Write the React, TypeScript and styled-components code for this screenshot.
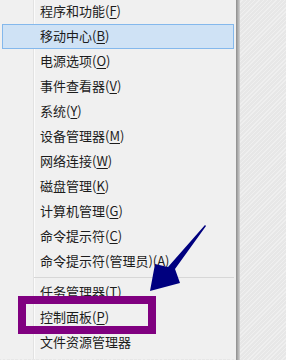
import React from 'react';
import styled, { createGlobalStyle } from 'styled-components';

const GlobalStyle = createGlobalStyle`
  html, body {
    margin: 0;
    padding: 0;
    width: 286px;
    height: 360px;
    overflow: hidden;
  }
`;

const Screen = styled.div`
  position: relative;
  display: flex;
  width: 286px;
  height: 360px;
  overflow: hidden;
  background-color: #e7e7e7;
  background-image: repeating-linear-gradient(
    135deg,
    rgba(255, 255, 255, 0.35) 0px,
    rgba(255, 255, 255, 0.35) 1px,
    transparent 1px,
    transparent 3px
  );
  font-family: 'Noto Sans CJK SC', 'Noto Sans', sans-serif;
`;

const Menu = styled.div`
  width: 236px;
  height: 100%;
  flex-shrink: 0;
  background: #f0f0f0;
  background-image: linear-gradient(
    to right,
    transparent 33px,
    #e2e2e2 33px,
    #e2e2e2 34px,
    #fbfbfb 34px,
    #fbfbfb 35px,
    transparent 35px
  );
  display: flex;
  flex-direction: column;
  padding: 0 2px;
  margin-top: -1px;
  box-sizing: border-box;
`;

const Edge = styled.div`
  width: 4px;
  height: 100%;
  flex-shrink: 0;
  background: linear-gradient(to right, #8c8c8c, #a8a8a8 40%, #d2d2d2);
`;

const Item = styled.div<{ $active?: boolean }>`
  height: 25px;
  box-sizing: border-box;
  display: flex;
  align-items: center;
  padding: 0 0 2px 37px;
  font-size: 13px;
  color: #1c1c1c;
  white-space: nowrap;
  border: 1px solid ${({ $active }) => ($active ? '#84b8ec' : 'transparent')};
  background: ${({ $active }) => ($active ? '#cfe2f5' : 'transparent')};

  u {
    text-decoration-thickness: 1px;
    text-underline-offset: 2px;
  }
`;

const Separator = styled.div`
  height: 6px;
  display: flex;
  align-items: center;
  padding-left: 32px;

  &::after {
    content: '';
    flex: 1;
    height: 1px;
    background: #d7d7d7;
  }
`;

const Overlay = styled.svg`
  position: absolute;
  left: 0;
  top: 0;
  pointer-events: none;
`;

type Entry = { label: string; key?: string; active?: boolean };

const top: Entry[] = [
  { label: '程序和功能', key: 'F' },
  { label: '移动中心', key: 'B', active: true },
  { label: '电源选项', key: 'O' },
  { label: '事件查看器', key: 'V' },
  { label: '系统', key: 'Y' },
  { label: '设备管理器', key: 'M' },
  { label: '网络连接', key: 'W' },
  { label: '磁盘管理', key: 'K' },
  { label: '计算机管理', key: 'G' },
  { label: '命令提示符', key: 'C' },
  { label: '命令提示符(管理员)', key: 'A' },
];

const bottom: Entry[] = [
  { label: '任务管理器', key: 'T' },
  { label: '控制面板', key: 'P' },
  { label: '文件资源管理器' },
];

const MenuItem: React.FC<{ entry: Entry }> = ({ entry }) => (
  <Item $active={entry.active}>
    {entry.label}
    {entry.key && (
      <>
        (<u>{entry.key}</u>)
      </>
    )}
  </Item>
);

export default function App() {
  return (
    <Screen>
      <GlobalStyle />
      <Menu>
        {top.map(e => (
          <MenuItem key={e.label} entry={e} />
        ))}
        <Separator />
        {bottom.map(e => (
          <MenuItem key={e.label} entry={e} />
        ))}
      </Menu>
      <Edge />
      <Overlay width="286" height="360" viewBox="0 0 286 360">
        <rect x="22" y="300" width="130" height="30" fill="none" stroke="#800080" strokeWidth="8" />
        <path
          d="M206 226 L175 269 L180 283 L150 291 L155 264 L168 267 L205 225 Z"
          fill="#00007f"
        />
      </Overlay>
    </Screen>
  );
}
